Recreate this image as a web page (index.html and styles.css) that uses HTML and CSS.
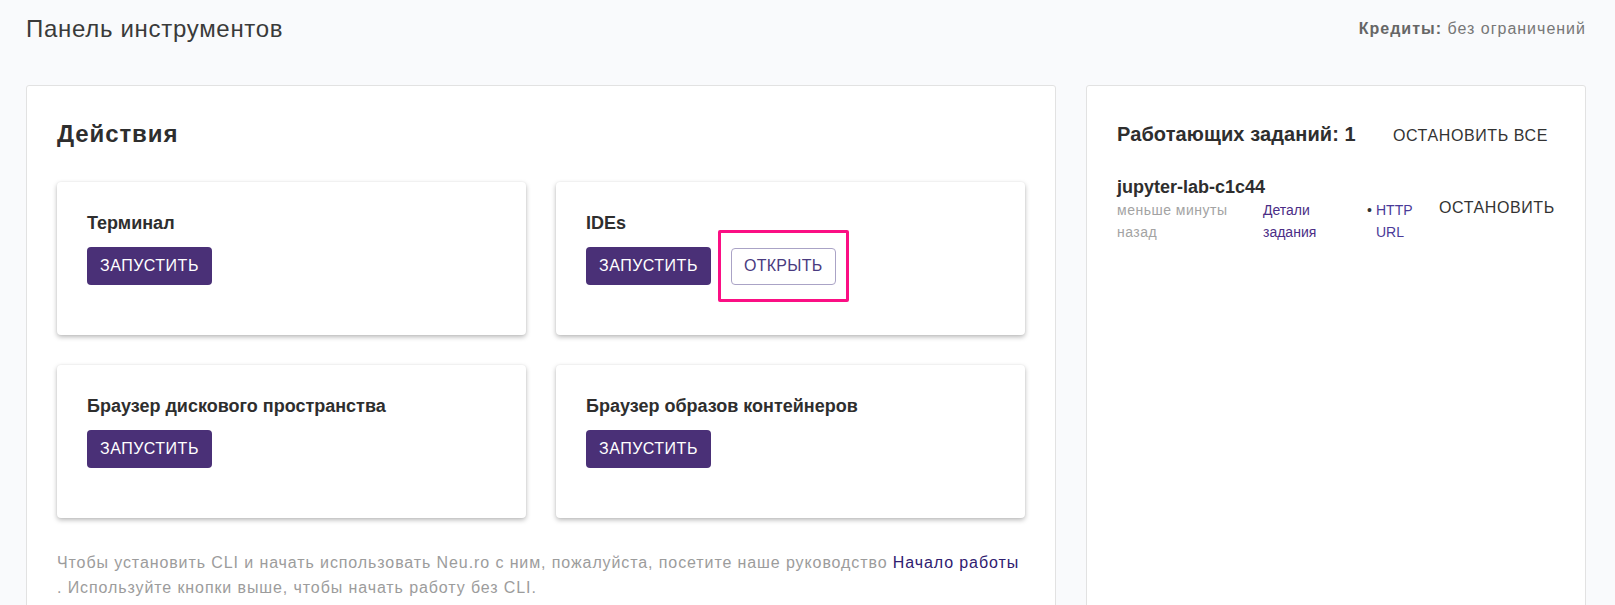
FILE: index.html
```html
<!DOCTYPE html>
<html lang="ru">
<head>
<meta charset="utf-8">
<title>Панель инструментов</title>
<link rel="stylesheet" href="styles.css">
</head>
<body>
<div class="page">
  <header class="topbar">
    <h1 class="page-title">Панель инструментов</h1>
    <div class="credits"><b>Кредиты:</b> без ограничений</div>
  </header>
  <main class="layout">
    <section class="panel actions">
      <h2 class="panel-title">Действия</h2>
      <div class="cards">
        <div class="card">
          <div class="card-title">Терминал</div>
          <div class="card-buttons"><button class="btn-primary">ЗАПУСТИТЬ</button></div>
        </div>
        <div class="card">
          <div class="card-title">IDEs</div>
          <div class="card-buttons">
            <button class="btn-primary">ЗАПУСТИТЬ</button>
            <span class="highlight"><button class="btn-outline">ОТКРЫТЬ</button></span>
          </div>
        </div>
        <div class="card">
          <div class="card-title">Браузер дискового пространства</div>
          <div class="card-buttons"><button class="btn-primary">ЗАПУСТИТЬ</button></div>
        </div>
        <div class="card">
          <div class="card-title">Браузер образов контейнеров</div>
          <div class="card-buttons"><button class="btn-primary">ЗАПУСТИТЬ</button></div>
        </div>
      </div>
      <p class="hint">Чтобы установить CLI и начать использовать Neu.ro с ним, пожалуйста, посетите наше руководство <a class="hint-link" href="#">Начало работы</a><br>. Используйте кнопки выше, чтобы начать работу без CLI.</p>
    </section>
    <aside class="panel jobs">
      <div class="jobs-head">
        <h2 class="jobs-title">Работающих заданий: 1</h2>
        <button class="btn-text stop-all">ОСТАНОВИТЬ ВСЕ</button>
      </div>
      <div class="job">
        <div class="job-name">jupyter-lab-c1c44</div>
        <div class="job-meta">
          <span class="job-time">меньше минуты назад</span>
          <a class="job-details" href="#">Детали задания</a>
          <span class="job-link"><span class="bullet">•</span><a class="job-url" href="#">HTTP URL</a></span>
          <button class="btn-text job-stop">ОСТАНОВИТЬ</button>
        </div>
      </div>
    </aside>
  </main>
</div>
</body>
</html>
```

FILE: styles.css
```css
* { box-sizing: border-box; }

html, body {
  margin: 0;
  padding: 0;
  background: #f9fafc;
  font-family: "Liberation Sans", Arial, sans-serif;
  color: #333;
}

.page {
  padding: 14px 29px 0 26px;
  height: 605px;
  overflow: hidden;
}

.topbar {
  display: flex;
  justify-content: space-between;
  align-items: center;
  height: 29px;
  margin-bottom: 42px;
}

.page-title {
  margin: 0;
  font-size: 24px;
  font-weight: normal;
  line-height: 29px;
  letter-spacing: 0.7px;
  color: #3a3a3a;
}

.credits {
  font-size: 16px;
  letter-spacing: 1px;
  color: #777;
}

.credits b {
  color: #666;
}

.layout {
  display: grid;
  grid-template-columns: 1030px 1fr;
  column-gap: 30px;
  align-items: stretch;
  min-height: 560px;
}

.panel {
  background: #fff;
  border: 1px solid #e2e2e2;
  border-radius: 3px;
}

.actions {
  padding: 33px 30px 30px 30px;
}

.panel-title {
  margin: 0 0 34px 0;
  font-size: 24px;
  font-weight: bold;
  line-height: 29px;
  letter-spacing: 0.9px;
  color: #2e2e2e;
}

.cards {
  display: grid;
  grid-template-columns: 469px 469px;
  gap: 30px;
}

.card {
  background: #fff;
  border-radius: 4px;
  box-shadow: 0 2px 5px rgba(0, 0, 0, 0.28), 0 0 2px rgba(0, 0, 0, 0.06);
  padding: 30px 30px 50px 30px;
  height: 153px;
}

.card-title {
  font-size: 18px;
  font-weight: bold;
  line-height: 22px;
  color: #2e2e2e;
  margin-bottom: 13px;
}

.card-buttons {
  display: flex;
  gap: 20px;
  align-items: center;
}

.btn-primary {
  font-family: inherit;
  font-size: 16px;
  line-height: 20px;
  letter-spacing: 0.5px;
  padding: 9px 13px;
  height: 38px;
  border: none;
  border-radius: 4px;
  background: #4a3077;
  color: #fff;
  cursor: pointer;
}

.btn-outline {
  font-family: inherit;
  font-size: 16px;
  line-height: 20px;
  letter-spacing: 0.3px;
  padding: 7px 12px;
  height: 37px;
  border: 1px solid #aaa3c6;
  border-radius: 4px;
  background: #fff;
  color: #4a3b80;
  cursor: pointer;
}

.highlight {
  position: relative;
  display: inline-flex;
}

.highlight::after {
  content: "";
  position: absolute;
  top: -18px;
  left: -13px;
  right: -13px;
  bottom: -17px;
  border: 3px solid #fb0f84;
  border-radius: 2px;
  pointer-events: none;
}

.hint {
  margin: 32px 0 0 0;
  font-size: 16px;
  line-height: 25px;
  letter-spacing: 0.9px;
  color: #9c9c9c;
}

.hint-link {
  color: #2f2070;
  text-decoration: none;
}

.jobs {
  padding: 36px 30px 30px 30px;
}

.jobs-head {
  display: flex;
  justify-content: space-between;
  align-items: baseline;
  margin-bottom: 29px;
}

.jobs-title {
  margin: 0;
  font-size: 20px;
  font-weight: bold;
  line-height: 24px;
  letter-spacing: 0.1px;
  color: #2e2e2e;
}

.btn-text {
  font-family: inherit;
  font-size: 16px;
  line-height: 22px;
  padding: 0 7px;
  border: none;
  background: none;
  color: #333;
  cursor: pointer;
  letter-spacing: 0.6px;
}

.job-name {
  font-size: 18px;
  font-weight: bold;
  line-height: 22px;
  color: #2e2e2e;
  margin-bottom: 1px;
}

.job-meta {
  display: flex;
  align-items: flex-start;
  font-size: 14px;
  line-height: 22px;
}

.job-time {
  width: 120px;
  margin-right: 26px;
  color: #a3a3a3;
  letter-spacing: 0.5px;
}

.job-details {
  width: 80px;
  margin-right: 24px;
  color: #4b2d86;
  text-decoration: none;
}

.job-link {
  display: flex;
  width: 54px;
  margin-right: 18px;
}

.bullet {
  color: #333;
  width: 9px;
  flex: none;
}

.job-url {
  width: 40px;
  color: #4a3a98;
  text-decoration: none;
}

.job-stop {
  padding: 0;
  margin-top: -2px;
}
```
